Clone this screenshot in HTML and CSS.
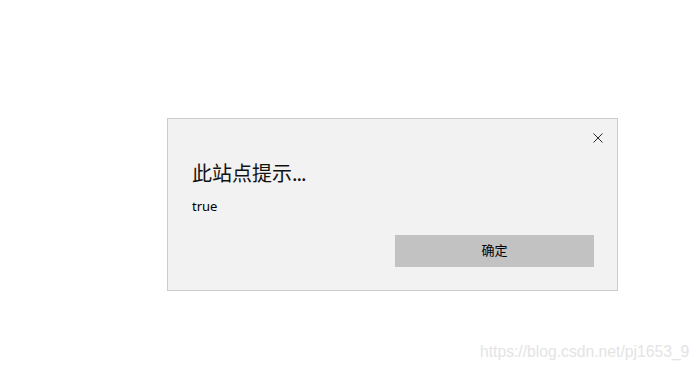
FILE: index.html
```html
<!DOCTYPE html>
<html lang="zh-CN">
<head>
<meta charset="utf-8">
<title>此站点提示</title>
<link rel="stylesheet" href="styles.css">
</head>
<body>
<div class="page">
  <div class="dialog">
    <button class="close" aria-label="关闭">
      <svg width="10" height="10" viewBox="0 0 10 10"><path d="M0.5 0.5 L9.5 9.5 M9.5 0.5 L0.5 9.5" stroke="#2b2b2b" stroke-width="1" fill="none"/></svg>
    </button>
    <div class="title">此站点提示<span class="dots">...</span></div>
    <div class="message">true</div>
    <div class="actions">
      <button class="ok">确定</button>
    </div>
  </div>
  <div class="watermark">https://blog.csdn.net/pj1653_9</div>
</div>
</body>
</html>
```
FILE: styles.css
```css
html, body {
  margin: 0;
  padding: 0;
  background: #ffffff;
}
.page {
  width: 700px;
  height: 372px;
  overflow: hidden;
  padding-top: 118px;
  padding-left: 167px;
  box-sizing: border-box;
  position: relative;
}
.dialog {
  position: relative;
  width: 451px;
  box-sizing: border-box;
  border: 1px solid #cccccc;
  background: #f2f2f2;
  padding: 44px 23px 23px 24px;
  font-family: "Noto Sans", "Noto Sans CJK SC", sans-serif;
  color: #000;
}
.close {
  position: absolute;
  top: 14px;
  right: 14px;
  width: 10px;
  height: 10px;
  padding: 0;
  border: 0;
  background: none;
  display: block;
}
.close svg { display: block; }
.title {
  font-family: "Noto Sans CJK SC", sans-serif;
  font-size: 20px;
  line-height: 20px;
  height: 20px;
  color: #111;
}
.dots {
  letter-spacing: -1px;
}
.message {
  margin-top: 15px;
  font-size: 13px;
  line-height: 16px;
  height: 16px;
}
.actions {
  margin-top: 21px;
  display: flex;
  justify-content: flex-end;
}
.ok {
  width: 199px;
  height: 32px;
  border: 0;
  padding: 0 0 2px 0;
  background: #c2c2c2;
  font-family: "Noto Sans CJK SC", sans-serif;
  font-size: 13px;
  line-height: 16px;
  color: #000;
}
.watermark {
  position: absolute;
  left: 480px;
  top: 343px;
  font-family: "Liberation Sans", Arial, sans-serif;
  font-size: 15.7px;
  line-height: 18px;
  color: #e4e4e4;
  white-space: nowrap;
}
```
